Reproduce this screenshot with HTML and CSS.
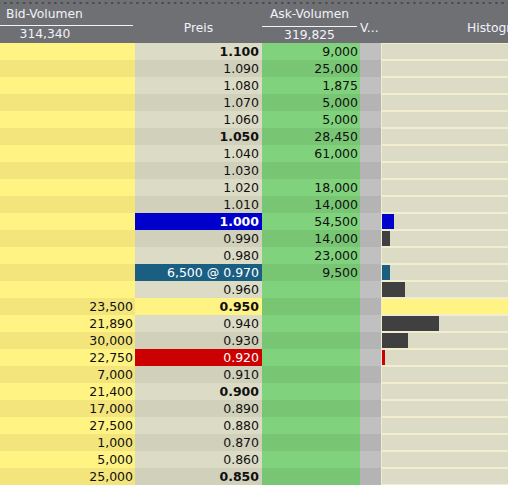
FILE: index.html
```html
<!DOCTYPE html>
<html>
<head>
<meta charset="utf-8">
<link rel="stylesheet" href="styles.css">
</head>
<body>
<div class="book">
  <div class="head">
    <div class="dots"></div>
    <div class="hrow">
      <div class="hc bid">
        <div class="htop">Bid-Volumen</div>
        <div class="hsum">314,340</div>
      </div>
      <div class="hc preis"><span>Preis</span></div>
      <div class="hc ask">
        <div class="htop">Ask-Volumen</div>
        <div class="hsum">319,825</div>
      </div>
      <div class="hc v"><span>V...</span></div>
      <div class="hc hist"><span>Histogramm</span></div>
    </div>
  </div>

  <div class="row odd"><div class="c b"></div><div class="c p bold">1.100</div><div class="c a">9,000</div><div class="c v"></div><div class="c h"><div class="tr"></div></div></div>
  <div class="row even"><div class="c b"></div><div class="c p">1.090</div><div class="c a">25,000</div><div class="c v"></div><div class="c h"><div class="tr"></div></div></div>
  <div class="row odd"><div class="c b"></div><div class="c p">1.080</div><div class="c a">1,875</div><div class="c v"></div><div class="c h"><div class="tr"></div></div></div>
  <div class="row even"><div class="c b"></div><div class="c p">1.070</div><div class="c a">5,000</div><div class="c v"></div><div class="c h"><div class="tr"></div></div></div>
  <div class="row odd"><div class="c b"></div><div class="c p">1.060</div><div class="c a">5,000</div><div class="c v"></div><div class="c h"><div class="tr"></div></div></div>
  <div class="row even"><div class="c b"></div><div class="c p bold">1.050</div><div class="c a">28,450</div><div class="c v"></div><div class="c h"><div class="tr"></div></div></div>
  <div class="row odd"><div class="c b"></div><div class="c p">1.040</div><div class="c a">61,000</div><div class="c v"></div><div class="c h"><div class="tr"></div></div></div>
  <div class="row even"><div class="c b"></div><div class="c p">1.030</div><div class="c a"></div><div class="c v"></div><div class="c h"><div class="tr"></div></div></div>
  <div class="row odd"><div class="c b"></div><div class="c p">1.020</div><div class="c a">18,000</div><div class="c v"></div><div class="c h"><div class="tr"></div></div></div>
  <div class="row even"><div class="c b"></div><div class="c p">1.010</div><div class="c a">14,000</div><div class="c v"></div><div class="c h"><div class="tr"></div></div></div>
  <div class="row odd"><div class="c b"></div><div class="c p bold last">1.000</div><div class="c a">54,500</div><div class="c v"></div><div class="c h"><div class="tr"><div class="bar blue" style="width:12px"></div></div></div></div>
  <div class="row even"><div class="c b"></div><div class="c p">0.990</div><div class="c a">14,000</div><div class="c v"></div><div class="c h"><div class="tr"><div class="bar" style="width:8px"></div></div></div></div>
  <div class="row odd"><div class="c b"></div><div class="c p">0.980</div><div class="c a">23,000</div><div class="c v"></div><div class="c h"><div class="tr"></div></div></div>
  <div class="row even"><div class="c b"></div><div class="c p order">6,500 @ 0.970</div><div class="c a">9,500</div><div class="c v"></div><div class="c h"><div class="tr"><div class="bar teal" style="width:8px"></div></div></div></div>
  <div class="row odd"><div class="c b"></div><div class="c p">0.960</div><div class="c a"></div><div class="c v"></div><div class="c h"><div class="tr"><div class="bar" style="width:23px"></div></div></div></div>
  <div class="row even"><div class="c b">23,500</div><div class="c p bold mark">0.950</div><div class="c a"></div><div class="c v"></div><div class="c h"><div class="tr markt"></div></div></div>
  <div class="row odd"><div class="c b">21,890</div><div class="c p">0.940</div><div class="c a"></div><div class="c v"></div><div class="c h"><div class="tr"><div class="bar" style="width:57px"></div></div></div></div>
  <div class="row even"><div class="c b">30,000</div><div class="c p">0.930</div><div class="c a"></div><div class="c v"></div><div class="c h"><div class="tr"><div class="bar" style="width:26px"></div></div></div></div>
  <div class="row odd"><div class="c b">22,750</div><div class="c p red">0.920</div><div class="c a"></div><div class="c v"></div><div class="c h"><div class="tr"><div class="bar redb" style="width:3px"></div></div></div></div>
  <div class="row even"><div class="c b">7,000</div><div class="c p">0.910</div><div class="c a"></div><div class="c v"></div><div class="c h"><div class="tr"></div></div></div>
  <div class="row odd"><div class="c b">21,400</div><div class="c p bold">0.900</div><div class="c a"></div><div class="c v"></div><div class="c h"><div class="tr"></div></div></div>
  <div class="row even"><div class="c b">17,000</div><div class="c p">0.890</div><div class="c a"></div><div class="c v"></div><div class="c h"><div class="tr"></div></div></div>
  <div class="row odd"><div class="c b">27,500</div><div class="c p">0.880</div><div class="c a"></div><div class="c v"></div><div class="c h"><div class="tr"></div></div></div>
  <div class="row even"><div class="c b">1,000</div><div class="c p">0.870</div><div class="c a"></div><div class="c v"></div><div class="c h"><div class="tr"></div></div></div>
  <div class="row odd"><div class="c b">5,000</div><div class="c p">0.860</div><div class="c a"></div><div class="c v"></div><div class="c h"><div class="tr"></div></div></div>
  <div class="row even"><div class="c b">25,000</div><div class="c p bold">0.850</div><div class="c a"></div><div class="c v"></div><div class="c h"><div class="tr"></div></div></div>
</div>
</body>
</html>
```

FILE: styles.css
```css
html, body {
  margin: 0;
  padding: 0;
  background: #dcdcc6;
  overflow: hidden;
}
.book {
  width: 508px;
  font-family: "DejaVu Sans", Verdana, sans-serif;
  font-size: 12.5px;
  color: #101010;
}
.head {
  height: 43px;
  background: #6f7074;
  color: #f2f2fa;
  font-size: 12.3px;
  display: flex;
  flex-direction: column;
}
.dots {
  height: 6px;
  background-image: radial-gradient(circle, #46474c 0.9px, transparent 1.3px);
  background-size: 6.3px 6px;
  background-position: 2px 0;
}
.hrow {
  flex: 1;
  display: grid;
  grid-template-columns: 135px 127px 98px 21px 1fr;
}
.hc {
  display: flex;
  align-items: center;
  justify-content: center;
  white-space: nowrap;
  overflow: hidden;
}
.hc span {
  padding-top: 7px;
}
.hc.bid, .hc.ask {
  flex-direction: column;
  align-items: stretch;
  justify-content: flex-start;
}
.htop {
  height: 20px;
  line-height: 17px;
  border-bottom: 1px solid #f2f2fa;
  text-align: center;
}
.hsum {
  line-height: 16px;
  text-align: center;
}
.hc.bid .htop {
  width: 133px;
  text-align: left;
  padding-left: 6px;
  box-sizing: border-box;
}
.hc.bid .hsum {
  width: 90px;
}
.hc.ask .htop,
.hc.ask .hsum {
  margin-right: 3px;
}
.hc.v {
  justify-content: flex-start;
}
.hc.hist {
  justify-content: flex-start;
  padding-left: 86px;
}
.row {
  display: grid;
  grid-template-columns: 135px 127px 98px 21px 1fr;
  height: 17px;
}
.c {
  text-align: right;
  line-height: 17px;
  padding-right: 2px;
  white-space: nowrap;
  overflow: hidden;
}
.odd .b { background: #fff383; }
.even .b { background: #f3e57b; }
.odd .p { background: #dcdcc6; }
.even .p { background: #d0d0bb; }
.odd .a { background: #80d27c; }
.even .a { background: #78c574; }
.odd .v { background: #c0c0c0; }
.even .v { background: #b4b4b4; }
.c.p { padding-right: 3px; }
.c.h {
  background: #f3edd0;
  padding: 1px 0 1px 1px;
  box-sizing: border-box;
}
.tr {
  height: 15px;
  background: #dcdcc6;
  display: flex;
}
.tr.markt { background: #fff383; }
.bar { height: 15px; background: #404040; }
.bar.blue { background: #0000cc; }
.bar.teal { background: #1a5f82; }
.bar.redb { background: #cc0000; }
.bold { font-weight: bold; }
.row .p.last { background: #0000cc; color: #ffffff; }
.row .p.order { background: #1a5f82; color: #ffffff; }
.row .p.red { background: #cc0000; color: #ffffff; }
.row .p.mark { background: #fff383; }
```
